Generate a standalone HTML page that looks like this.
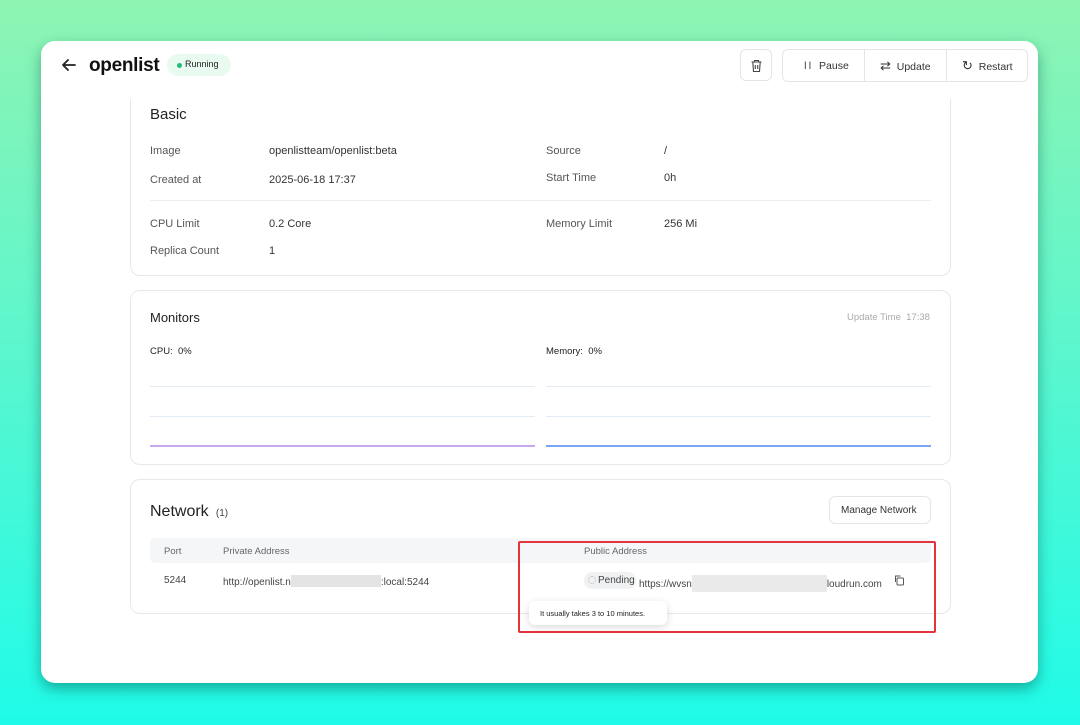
<!DOCTYPE html><html><head><meta charset="utf-8"><style>
*{margin:0;padding:0;box-sizing:border-box}
body{width:1080px;height:725px;overflow:hidden;background:linear-gradient(180deg,#8ef4b2 0%,#5ff6cc 45%,#1ffbe8 100%);font-family:"Liberation Sans",sans-serif;position:relative;color:#222}
.win{position:absolute;left:41px;top:41px;width:997px;height:642px;background:#fff;border-radius:14px;box-shadow:0 6px 14px rgba(0,80,70,.45);overflow:hidden}
.a{position:absolute;white-space:nowrap}
.card{position:absolute;left:89px;width:821px;border:1px solid #e6e8eb;border-radius:10px;background:#fff}
.lbl{font-size:11px;color:#555}
.val{font-size:11px;color:#333}
.h{font-size:15px;color:#222}
.btn{position:absolute;border:1px solid #e3e5e8;border-radius:6px;background:#fff;font-size:10.5px;color:#333}
</style></head><body>
<div class="win">
 <div class="card" style="top:40px;height:195px;border-top:none"></div>
 <div class="a" style="left:0;top:0;width:997px;height:58px;background:#fff"></div>
 <svg class="a" style="left:19px;top:15px" width="18" height="18" viewBox="0 0 18 18"><path d="M15 9H3M8 4L3 9l5 5" stroke="#222" stroke-width="1.8" fill="none" stroke-linecap="round" stroke-linejoin="round"/></svg>
 <div class="a" style="left:48px;top:14px;font-size:19px;font-weight:bold;color:#111;letter-spacing:-0.3px">openlist</div>
 <div class="a" style="left:126px;top:13px;width:64px;height:22px;border-radius:11px;background:#e9faf1;font-size:9px;color:#222;padding:5px 0 0 18px">Running</div>
 <div class="a" style="left:136px;top:22px;width:5px;height:5px;border-radius:50%;background:#22bb77"></div>
 <div class="btn" style="left:699px;top:8px;width:32px;height:32px"><svg style="position:absolute;left:9px;top:9px" width="13" height="14" viewBox="0 0 13 14"><path d="M1.5 3h10M4.5 3V1.5h4V3M2.8 3l.7 9.5h6l.7-9.5M5.3 6v4M7.7 6v4" stroke="#444" stroke-width="1.1" fill="none"/></svg></div>
 <div class="btn" style="left:741px;top:8px;width:246px;height:33px"></div>
 <div class="a" style="left:823px;top:9px;width:1px;height:31px;background:#e3e5e8"></div>
 <div class="a" style="left:905px;top:9px;width:1px;height:31px;background:#e3e5e8"></div>
 <div class="a" style="left:763px;top:19px;font-size:10.5px;color:#333"><span style="letter-spacing:2px;font-size:10px">ǀǀ</span> &nbsp;Pause</div>
 <div class="a" style="left:839px;top:17px;font-size:10.5px;color:#333"><span style="font-size:13px">⇄</span> &nbsp;Update</div>
 <div class="a" style="left:921px;top:17px;font-size:10.5px;color:#333"><span style="font-size:13px">↻</span> &nbsp;Restart</div>

 <div class="a h" style="left:109px;top:65px">Basic</div>
 <div class="a lbl" style="left:109px;top:104px">Image</div><div class="a val" style="left:228px;top:104px">openlistteam/openlist:beta</div>
 <div class="a lbl" style="left:505px;top:104px">Source</div><div class="a val" style="left:623px;top:104px">/</div>
 <div class="a lbl" style="left:109px;top:133px">Created at</div><div class="a val" style="left:228px;top:133px">2025-06-18 17:37</div>
 <div class="a lbl" style="left:505px;top:131px">Start Time</div><div class="a val" style="left:623px;top:131px">0h</div>
 <div class="a" style="left:109px;top:159px;width:781px;height:1px;background:#eceef0"></div>
 <div class="a lbl" style="left:109px;top:177px">CPU Limit</div><div class="a val" style="left:228px;top:177px">0.2 Core</div>
 <div class="a lbl" style="left:505px;top:177px">Memory Limit</div><div class="a val" style="left:623px;top:177px">256 Mi</div>
 <div class="a lbl" style="left:109px;top:204px">Replica Count</div><div class="a val" style="left:228px;top:204px">1</div>

 <div class="card" style="top:249px;height:175px"></div>
 <div class="a" style="left:109px;top:269px;font-size:13px;color:#222">Monitors</div>
 <div class="a" style="left:806px;top:271px;font-size:9.5px;color:#aaa">Update Time&nbsp; 17:38</div>
 <div class="a" style="left:109px;top:305px;font-size:9.5px;color:#222">CPU:&nbsp; 0%</div>
 <div class="a" style="left:505px;top:305px;font-size:9.5px;color:#222">Memory:&nbsp; 0%</div>
 <div class="a" style="left:109px;top:345px;width:385px;height:1px;background:#e3ebf5"></div>
 <div class="a" style="left:109px;top:375px;width:385px;height:1px;background:#e3ebf5"></div>
 <div class="a" style="left:109px;top:404px;width:385px;height:2px;background:#c9a8ee"></div>
 <div class="a" style="left:505px;top:345px;width:385px;height:1px;background:#e3ebf5"></div>
 <div class="a" style="left:505px;top:375px;width:385px;height:1px;background:#e3ebf5"></div>
 <div class="a" style="left:505px;top:404px;width:385px;height:2px;background:#7aa6f5"></div>

 <div class="card" style="top:438px;height:135px"></div>
 <div class="a" style="left:109px;top:462px;font-size:16px;color:#222">Network <span style="font-size:10px;color:#444">&nbsp;(1)</span></div>
 <div class="btn" style="left:788px;top:455px;width:102px;height:28px;padding:8px 0 0 11px;font-size:10px">Manage Network</div>
 <div class="a" style="left:109px;top:497px;width:781px;height:25px;background:#f5f6f7;border-radius:5px"></div>
 <div class="a" style="left:123px;top:505px;font-size:9.5px;color:#666">Port</div>
 <div class="a" style="left:182px;top:505px;font-size:9.5px;color:#666">Private Address</div>
 <div class="a" style="left:543px;top:505px;font-size:9.5px;color:#666">Public Address</div>
 <div class="a" style="left:123px;top:534px;font-size:10px;color:#444">5244</div>
 <div class="a" style="left:182px;top:534px;font-size:10px;color:#444">http://openlist.n<span style="display:inline-block;width:90px;height:12px;background:#e4e4e4;vertical-align:-2px"></span>:local:5244</div>
 <div class="a" style="left:543px;top:531px;width:52px;height:17px;border-radius:8px;background:#f0f1f2;font-size:10px;color:#444;padding:3px 0 0 14px">Pending</div>
 <div class="a" style="left:547px;top:535px;width:8px;height:8px;border-radius:50%;border:1.5px dotted #bbb"></div>
 <div class="a" style="left:598px;top:534px;font-size:10px;color:#444">https://wvsn<span style="display:inline-block;width:135px;height:17px;background:#eaeaea;vertical-align:-5px"></span>loudrun.com</div>
 <svg class="a" style="left:852px;top:533px" width="12" height="12" viewBox="0 0 12 12"><rect x="4" y="4" width="6.5" height="7" rx="1" stroke="#555" fill="none"/><path d="M2.5 8V2h5" stroke="#555" fill="none"/></svg>
 <div class="a" style="left:488px;top:560px;width:138px;height:24px;background:#fff;border-radius:6px;box-shadow:0 2px 8px rgba(0,0,0,.15);font-size:7.5px;color:#222;padding:8px 0 0 11px">It usually takes 3 to 10 minutes.</div>
 <div class="a" style="left:477px;top:500px;width:418px;height:92px;border:2px solid #e3343d;border-radius:2px"></div>
</div>
</body></html>
